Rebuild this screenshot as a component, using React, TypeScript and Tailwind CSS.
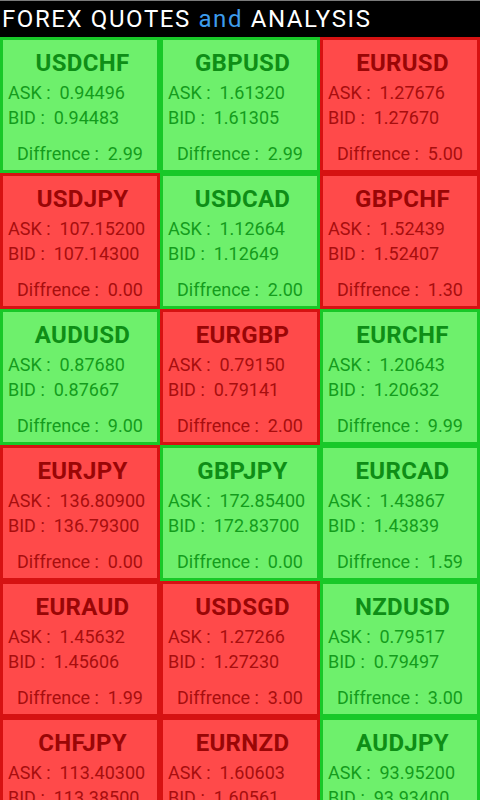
import React from 'react';

type Quote = {
  pair: string;
  ask: string;
  bid: string;
  diff: string;
  up: boolean;
};

const quotes: Quote[] = [
  { pair: 'USDCHF', ask: '0.94496', bid: '0.94483', diff: '2.99', up: true },
  { pair: 'GBPUSD', ask: '1.61320', bid: '1.61305', diff: '2.99', up: true },
  { pair: 'EURUSD', ask: '1.27676', bid: '1.27670', diff: '5.00', up: false },
  { pair: 'USDJPY', ask: '107.15200', bid: '107.14300', diff: '0.00', up: false },
  { pair: 'USDCAD', ask: '1.12664', bid: '1.12649', diff: '2.00', up: true },
  { pair: 'GBPCHF', ask: '1.52439', bid: '1.52407', diff: '1.30', up: false },
  { pair: 'AUDUSD', ask: '0.87680', bid: '0.87667', diff: '9.00', up: true },
  { pair: 'EURGBP', ask: '0.79150', bid: '0.79141', diff: '2.00', up: false },
  { pair: 'EURCHF', ask: '1.20643', bid: '1.20632', diff: '9.99', up: true },
  { pair: 'EURJPY', ask: '136.80900', bid: '136.79300', diff: '0.00', up: false },
  { pair: 'GBPJPY', ask: '172.85400', bid: '172.83700', diff: '0.00', up: true },
  { pair: 'EURCAD', ask: '1.43867', bid: '1.43839', diff: '1.59', up: true },
  { pair: 'EURAUD', ask: '1.45632', bid: '1.45606', diff: '1.99', up: false },
  { pair: 'USDSGD', ask: '1.27266', bid: '1.27230', diff: '3.00', up: false },
  { pair: 'NZDUSD', ask: '0.79517', bid: '0.79497', diff: '3.00', up: true },
  { pair: 'CHFJPY', ask: '113.40300', bid: '113.38500', diff: '1.80', up: false },
  { pair: 'EURNZD', ask: '1.60603', bid: '1.60561', diff: '4.20', up: false },
  { pair: 'AUDJPY', ask: '93.95200', bid: '93.93400', diff: '1.80', up: true },
];

function QuoteCell({ q }: { q: Quote }) {
  const box = q.up
    ? 'bg-[#6ef06c] border-[#18c828] text-[#149c1c]'
    : 'bg-[#ff4a4a] border-[#d61212] text-[#a80e0e]';
  const title = q.up ? 'text-[#0e8e16]' : 'text-[#9a0606]';

  return (
    <div className={`h-[136px] border-[3px] pt-[10px] pl-[5px] ${box}`}>
      <h3 className={`text-center text-[24px] leading-[27px] font-bold tracking-[0.3px] ${title}`}>{q.pair}</h3>
      <p className="mt-[3px] text-[18px] leading-[25px] whitespace-pre">ASK :  {q.ask}</p>
      <p className="text-[18px] leading-[25px] whitespace-pre">BID :  {q.bid}</p>
      <p className="mt-[11px] pr-[5px] text-center text-[18px] leading-[25px] whitespace-pre">Diffrence :  {q.diff}</p>
    </div>
  );
}

export default function App() {
  return (
    <div className="w-[480px] h-[800px] overflow-hidden bg-black font-['Roboto',sans-serif]">
      {/* Title bar */}
      <div className="h-[37px] border-t border-[#7a7a7a] pl-[2px] text-[24px] leading-[37px] tracking-[1.6px] text-white whitespace-pre">
        FOREX QUOTES <span className="text-[#3d9cec]">and</span> ANALYSIS
      </div>

      {/* Quotes grid */}
      <div className="grid grid-cols-3">
        {quotes.map((q) => (
          <QuoteCell key={q.pair} q={q} />
        ))}
      </div>
    </div>
  );
}
